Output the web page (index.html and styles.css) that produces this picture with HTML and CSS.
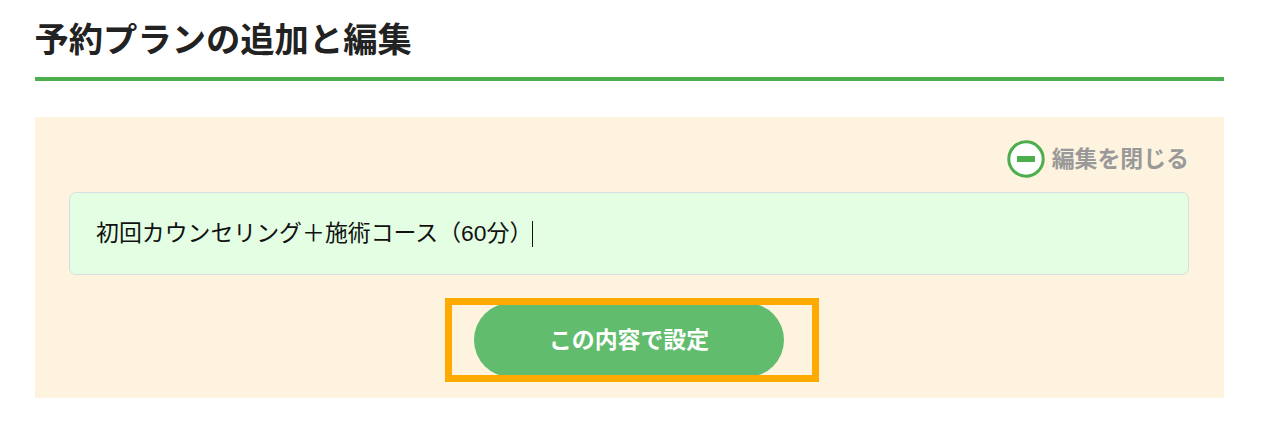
FILE: index.html
```html
<!doctype html>
<html lang="ja">
<head>
  <meta charset="utf-8">
  <title>予約プランの追加と編集</title>
  <link rel="stylesheet" href="styles.css">
</head>
<body>

<h1 class="page-title">予約プランの追加と編集</h1>

<div class="edit-panel">
  <div class="close-edit">
    <svg class="close-icon" viewBox="0 0 38 38">
      <circle cx="19" cy="19" r="17.2" fill="#fff" stroke="#4cae4c" stroke-width="3" />
      <rect x="10" y="16" width="18" height="6" fill="#4cae4c" />
    </svg>
    <span class="close-label">編集を閉じる</span>
  </div>

  <div class="plan-input">
    <span class="plan-name">初回カウンセリング＋施術コース（60分）</span>
    <span class="caret"></span>
  </div>

  <div class="button-row">
    <button class="submit-btn" type="button">この内容で設定</button>
    <div class="highlight"></div>
  </div>
</div>

</body>
</html>
```

FILE: styles.css
```css
body {
  margin: 0;
  padding: 17px 40.5px 0 34.5px;
  background: #fff;
  font-family: "Liberation Sans", "Noto Sans CJK JP", sans-serif;
}

.page-title {
  margin: 0 0 36px;
  height: 60px;
  line-height: 47px;
  border-bottom: 4px solid #4cae4c;
  color: #222;
  font-size: 34.3px;
  font-weight: bold;
}

.edit-panel {
  box-sizing: border-box;
  height: 281px;
  padding: 23px 34.5px 0;
  background: #fdf3df;
}

.close-edit {
  display: flex;
  justify-content: flex-end;
  align-items: center;
  gap: 7px;
  height: 38px;
  color: #999;
  font-size: 22.9px;
  font-weight: bold;
}

.close-icon {
  width: 38px;
  height: 38px;
}

.close-label {
  padding-bottom: 4px;
}

.plan-input {
  display: flex;
  align-items: center;
  box-sizing: border-box;
  height: 83px;
  margin-top: 14px;
  padding: 0 26px;
  border: 1.5px solid #d9dce0;
  border-radius: 7px;
  background: #e3fee3;
  color: #111;
  font-size: 22.9px;
  white-space: nowrap;
}

.plan-name {
  padding-bottom: 5px;
}

.caret {
  width: 1px;
  height: 26px;
  background: #111;
}

.button-row {
  position: relative;
  display: flex;
  justify-content: center;
  margin-top: 28px;
}

.submit-btn {
  width: 310px;
  height: 74px;
  padding: 0 0 4px;
  border: none;
  border-radius: 37px;
  background: #62bc6d;
  color: #fff;
  font-family: inherit;
  font-size: 22.9px;
  font-weight: bold;
  cursor: pointer;
}

/* frame over the button */
.highlight {
  position: absolute;
  top: -5px;
  left: 376px;
  box-sizing: border-box;
  width: 374px;
  height: 84px;
  border: 7px solid #ffaa00;
  pointer-events: none;
}
```
